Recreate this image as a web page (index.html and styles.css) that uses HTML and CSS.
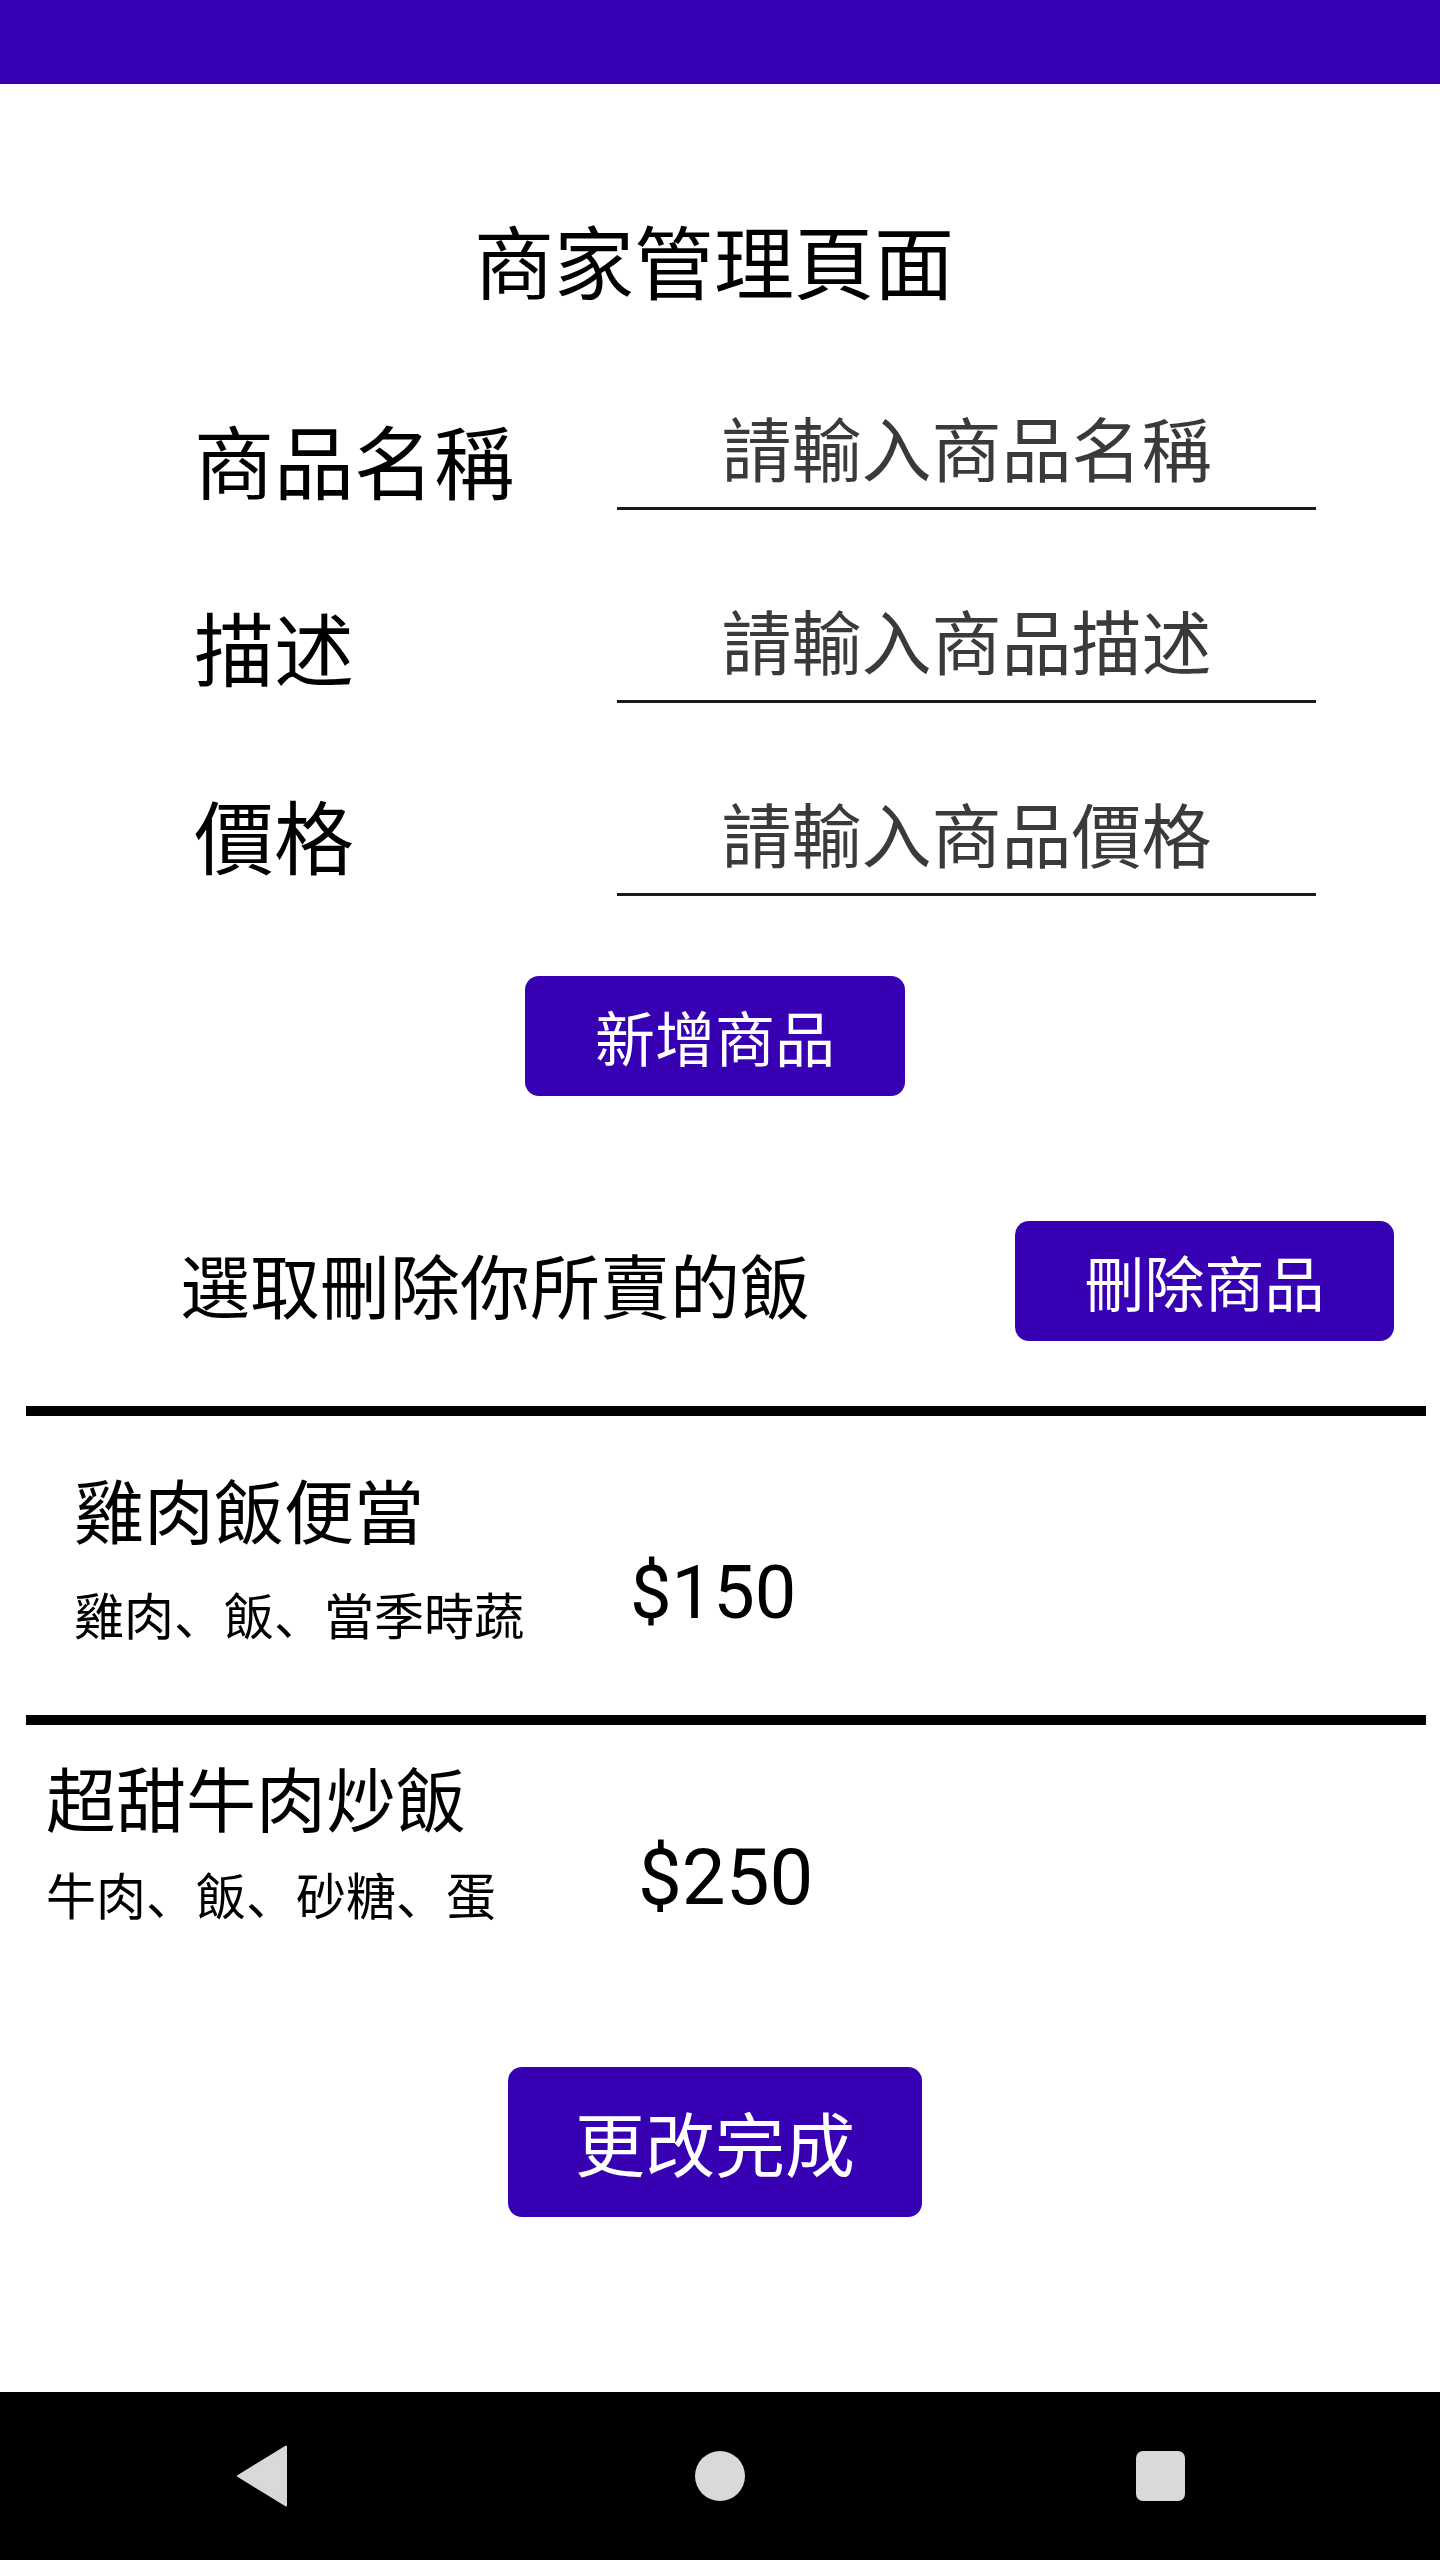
FILE: index.html
```html
<!DOCTYPE html>
<html>
<head>
<meta charset="utf-8">
<title>商家管理頁面</title>
<link rel="stylesheet" href="styles.css">
</head>
<body>
<div class="screen">
  <div class="status-bar"></div>
  <main class="content">
    <h1 class="title">商家管理頁面</h1>
    <div class="form">
      <div class="form-row row-name">
        <div class="label">商品名稱</div>
        <div class="field"><span class="hint">請輸入商品名稱</span></div>
      </div>
      <div class="form-row row-desc">
        <div class="label">描述</div>
        <div class="field"><span class="hint">請輸入商品描述</span></div>
      </div>
      <div class="form-row row-price">
        <div class="label">價格</div>
        <div class="field"><span class="hint">請輸入商品價格</span></div>
      </div>
    </div>
    <div class="add-row">
      <button class="btn btn-add">新增商品</button>
    </div>
    <div class="section-header">
      <div class="section-title">選取刪除你所賣的飯</div>
      <button class="btn btn-delete">刪除商品</button>
    </div>
    <div class="divider divider-top"></div>
    <div class="item item-1">
      <div class="item-info">
        <div class="item-name">雞肉飯便當</div>
        <div class="item-desc">雞肉、飯、當季時蔬</div>
      </div>
      <div class="item-price">$150</div>
    </div>
    <div class="divider"></div>
    <div class="item item-2">
      <div class="item-info">
        <div class="item-name">超甜牛肉炒飯</div>
        <div class="item-desc">牛肉、飯、砂糖、蛋</div>
      </div>
      <div class="item-price">$250</div>
    </div>
    <div class="done-row">
      <button class="btn btn-done">更改完成</button>
    </div>
  </main>
  <nav class="nav-bar">
    <svg class="nav-back" width="51" height="62" viewBox="0 0 51 62">
      <polygon points="2,31 50,1.5 50,60.5" fill="#d9d9d9" stroke="#d9d9d9" stroke-width="2" stroke-linejoin="round"/>
    </svg>
    <div class="nav-home"></div>
    <div class="nav-recent"></div>
  </nav>
</div>
</body>
</html>
```

FILE: styles.css
```css
body {
  margin: 0;
  background: #ffffff;
}

.screen {
  width: 1440px;
  height: 2560px;
  display: flex;
  flex-direction: column;
  font-family: "Noto Sans CJK SC", Roboto, sans-serif;
  color: #000000;
  background: #ffffff;
  text-spacing-trim: space-all;
}

.status-bar {
  flex: none;
  height: 84px;
  background: #3700b3;
}

.content {
  flex: 1;
  display: flex;
  flex-direction: column;
}

.title {
  margin: 134px 0 0;
  padding-right: 12px;
  font-size: 80px;
  line-height: 80px;
  font-weight: 400;
  text-align: center;
}

.form {
  margin-top: 114px;
  display: flex;
  flex-direction: column;
  gap: 95px;
}

.form-row {
  display: flex;
  align-items: flex-start;
  padding-left: 194px;
}

.label {
  width: 423px;
  font-size: 80px;
  line-height: 80px;
}

.row-name .label {
  margin-top: 6px;
}

.row-price .label {
  margin-top: -5px;
}

.field {
  width: 699px;
  height: 95px;
  border-bottom: 3px solid #1a1a1a;
  text-align: center;
}

.hint {
  display: block;
  font-size: 70px;
  line-height: 70px;
  color: #3a3a3a;
}

.add-row {
  margin-top: 80px;
  display: flex;
  justify-content: center;
  padding-right: 10px;
}

.btn {
  border: none;
  padding: 0;
  margin: 0;
  background: #3700b3;
  color: #ffffff;
  border-radius: 14px;
  font-family: "Noto Sans CJK SC", Roboto, sans-serif;
  display: flex;
  align-items: center;
  justify-content: center;
}

.btn-add {
  width: 380px;
  height: 120px;
  font-size: 60px;
  line-height: 60px;
}

.section-header {
  margin-top: 125px;
  display: flex;
  justify-content: space-between;
  align-items: flex-start;
  padding: 0 46px 0 180px;
}

.section-title {
  margin-top: 28px;
  font-size: 70px;
  line-height: 70px;
}

.btn-delete {
  width: 379px;
  height: 120px;
  font-size: 60px;
  line-height: 60px;
}

.divider {
  flex: none;
  height: 10px;
  background: #000000;
  margin: 0 14px 0 26px;
}

.divider-top {
  margin-top: 65px;
}

.item {
  display: flex;
  align-items: flex-start;
}

.item-name {
  font-size: 70px;
  line-height: 70px;
}

.item-desc {
  font-size: 50px;
  line-height: 49px;
}

.item-price {
  font-family: Roboto, sans-serif;
  font-size: 74px;
  line-height: 70px;
}

.item-1 {
  padding: 58px 0 77px 74px;
}

.item-1 .item-info {
  width: 556px;
}

.item-1 .item-desc {
  margin-top: 45px;
}

.item-1 .item-price {
  margin-top: 84px;
}

.item-2 {
  padding: 37px 0 0 46px;
}

.item-2 .item-info {
  width: 592px;
}

.item-2 .item-desc {
  margin-top: 37px;
}

.item-2 .item-price {
  margin-top: 81px;
  font-size: 78px;
}

.done-row {
  margin-top: 149px;
  display: flex;
  justify-content: center;
  padding-right: 10px;
}

.btn-done {
  width: 414px;
  height: 150px;
  font-size: 70px;
  line-height: 70px;
}

.nav-bar {
  flex: none;
  height: 168px;
  background: #000000;
  display: flex;
  align-items: center;
  padding-left: 236px;
}

.nav-back {
  display: block;
  flex: none;
}

.nav-home {
  flex: none;
  width: 50px;
  height: 50px;
  border-radius: 50%;
  background: #d9d9d9;
  margin-left: 408px;
}

.nav-recent {
  flex: none;
  width: 49px;
  height: 50px;
  border-radius: 7px;
  background: #d9d9d9;
  margin-left: 391px;
}
```
